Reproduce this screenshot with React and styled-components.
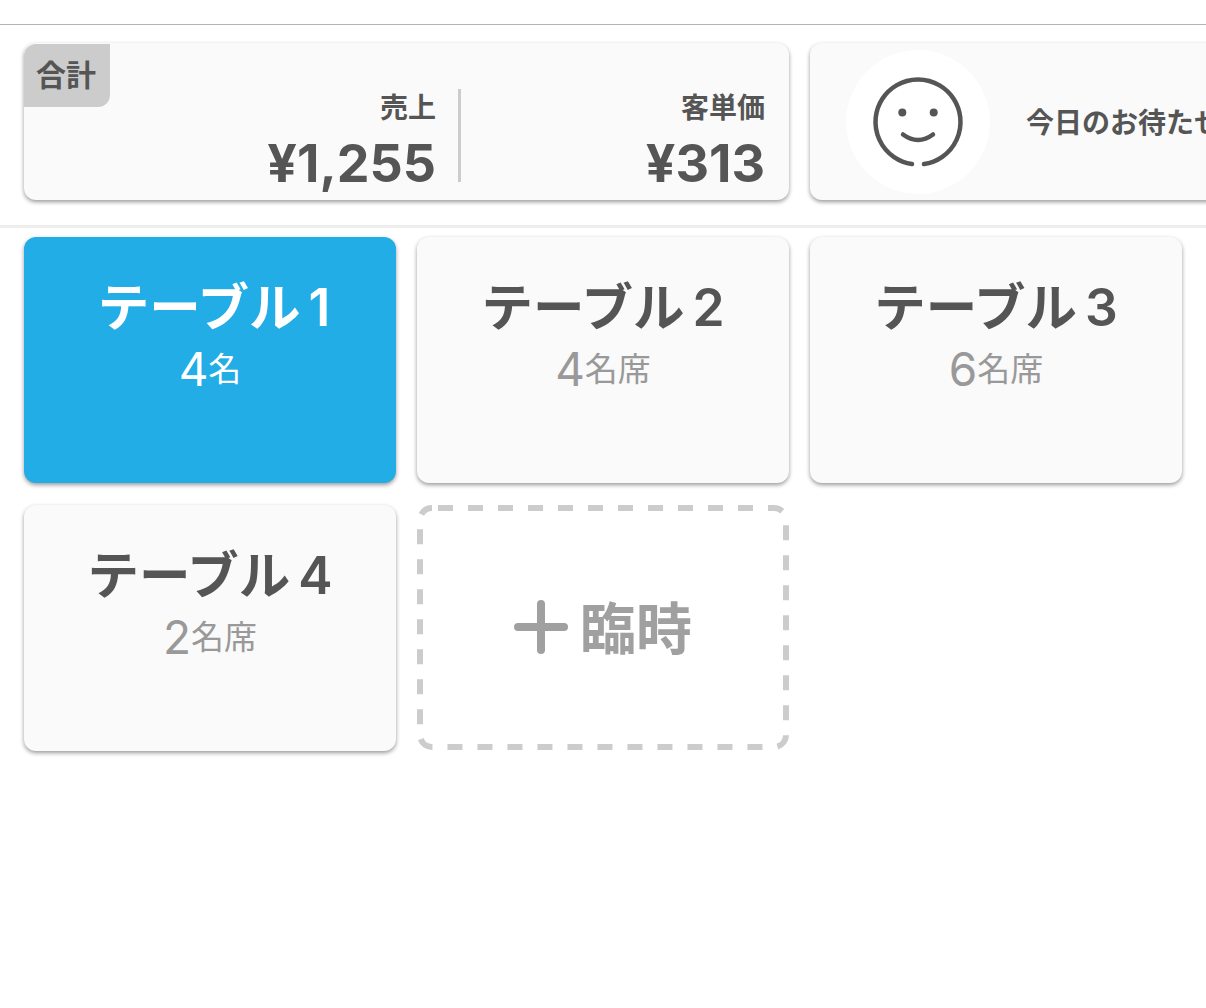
import React from 'react';
import styled, { createGlobalStyle } from 'styled-components';

const GlobalStyle = createGlobalStyle`
  html, body {
    margin: 0;
    padding: 0;
    background: #fff;
    overflow: hidden;
  }
  * {
    box-sizing: border-box;
  }
  body {
    font-family: Inter, "Noto Sans CJK JP", sans-serif;
    color: #555;
  }
`;

const Page = styled.div`
  width: 1206px;
  height: 1008px;
  overflow: hidden;
`;

const TopBar = styled.header`
  height: 25px;
  border-bottom: 1px solid #b4b4b4;
`;

const SummaryStrip = styled.section`
  display: flex;
  gap: 21px;
  height: 203px;
  padding: 18px 0 0 24px;
  border-bottom: 3px solid #eee;
`;

const Panel = styled.div`
  position: relative;
  flex: 0 0 765px;
  height: 157px;
  border-radius: 12px;
  background: #fafafa;
  box-shadow: 0 2px 4px rgba(0, 0, 0, 0.4);
  display: flex;
  align-items: center;
`;

const Tag = styled.div`
  position: absolute;
  top: 1px;
  left: 0;
  width: 86px;
  height: 63px;
  padding: 12px 0 0 12px;
  background: #ccc;
  border-radius: 12px 0 12px 0;
  font-size: 30px;
  line-height: 38px;
  font-weight: 700;
`;

const Figure = styled.div`
  display: flex;
  flex-direction: column;
  align-items: flex-end;
  width: ${props => props.$width}px;
  height: 93px;
  margin-top: 28px;
  padding-right: ${props => props.$inset}px;
  border-right: ${props => (props.$divided ? '3px solid #ccc' : 'none')};
`;

const FigureLabel = styled.div`
  padding-top: 1px;
  font-size: 28px;
  line-height: 36px;
  font-weight: 700;
`;

const FigureValue = styled.div`
  margin-top: 18px;
  font-size: 52px;
  line-height: 40px;
  font-weight: 700;
`;

const FaceCircle = styled.div`
  display: flex;
  align-items: center;
  justify-content: center;
  width: 144px;
  height: 144px;
  margin-left: 36px;
  border-radius: 50%;
  background: #fff;
`;

const WaitLabel = styled.div`
  margin: 0 0 2px 36px;
  font-size: 28px;
  font-weight: 700;
  white-space: nowrap;
`;

const TableGrid = styled.main`
  display: grid;
  grid-template-columns: repeat(3, 372px);
  grid-auto-rows: 246px;
  column-gap: 21px;
  row-gap: 22px;
  padding: 9px 0 0 24px;
`;

const TableCard = styled.button`
  display: flex;
  flex-direction: column;
  align-items: center;
  padding: 40px 0 0;
  border: 0;
  border-radius: 12px;
  font-family: inherit;
  background: ${props => (props.$active ? '#22ade6' : '#fafafa')};
  box-shadow: 0 2px 4px rgba(0, 0, 0, 0.4);
`;

const TableName = styled.div`
  padding-left: ${props => props.$indent || 0}px;
  font-size: 51.5px;
  line-height: 61px;
  font-weight: 600;
  word-spacing: -5px;
  white-space: nowrap;
  color: ${props => (props.$active ? '#fff' : '#555')};
`;

const Seats = styled.div`
  display: flex;
  align-items: center;
  height: 62px;
  color: ${props => (props.$active ? '#fff' : '#999')};
`;

const SeatCount = styled.span`
  font-size: 46px;
  line-height: 62px;
`;

const SeatUnit = styled.span`
  font-size: 33px;
  line-height: 62px;
`;

const AddCard = styled.button`
  position: relative;
  display: flex;
  align-items: center;
  justify-content: center;
  gap: 12px;
  padding: 0 0 8px;
  border: 0;
  background: transparent;
  font-family: inherit;
  font-size: 56px;
  font-weight: 700;
  color: #a0a0a0;
`;

const DashedOutline = styled.svg`
  position: absolute;
  inset: 0;
`;

const PlusGlyph = styled.svg`
  margin-top: 5px;
`;

const tables = [
  { name: 'テーブル 1', count: 4, unit: '名', active: true, indent: 8 },
  { name: 'テーブル 2', count: 4, unit: '名席' },
  { name: 'テーブル 3', count: 6, unit: '名席' },
  { name: 'テーブル 4', count: 2, unit: '名席' },
];

const SmileFace = () => (
  <svg width="92" height="92" viewBox="0 0 92 92" fill="none" stroke="#555" strokeWidth="4.5" strokeLinecap="round">
    <path d="M40 88.07A42.5 42.5 0 1 1 52 88.07" />
    <circle cx="30.3" cy="36.6" r="4" fill="#555" stroke="none" />
    <circle cx="61.7" cy="36.6" r="4" fill="#555" stroke="none" />
    <path d="M31 58.5Q46 69.5 61 58.5" />
  </svg>
);

const PlusIcon = () => (
  <PlusGlyph width="54" height="54" viewBox="0 0 54 54" fill="none" stroke="#a0a0a0" strokeWidth="8" strokeLinecap="round">
    <path d="M27 4V50M4 27H50" />
  </PlusGlyph>
);

const App = () => (
  <Page>
    <GlobalStyle />
    <TopBar />
    <SummaryStrip>
      <Panel>
        <Tag>合計</Tag>
        <Figure $width={437} $inset={22} $divided>
          <FigureLabel>売上</FigureLabel>
          <FigureValue>¥1,255</FigureValue>
        </Figure>
        <Figure $width={328} $inset={24}>
          <FigureLabel>客単価</FigureLabel>
          <FigureValue>¥313</FigureValue>
        </Figure>
      </Panel>
      <Panel>
        <FaceCircle>
          <SmileFace />
        </FaceCircle>
        <WaitLabel>今日のお待たせ時間</WaitLabel>
      </Panel>
    </SummaryStrip>
    <TableGrid>
      {tables.map(table => (
        <TableCard key={table.name} $active={table.active}>
          <TableName $active={table.active} $indent={table.indent}>{table.name}</TableName>
          <Seats $active={table.active}>
            <SeatCount>{table.count}</SeatCount>
            <SeatUnit>{table.unit}</SeatUnit>
          </Seats>
        </TableCard>
      ))}
      <AddCard>
        <DashedOutline width="372" height="246" viewBox="0 0 372 246" fill="none">
          <rect x="3" y="3" width="366" height="239" rx="12" stroke="#ccc" strokeWidth="6" strokeDasharray="15 15" strokeDashoffset="-6" />
        </DashedOutline>
        <PlusIcon />
        臨時
      </AddCard>
    </TableGrid>
  </Page>
);

export default App;
